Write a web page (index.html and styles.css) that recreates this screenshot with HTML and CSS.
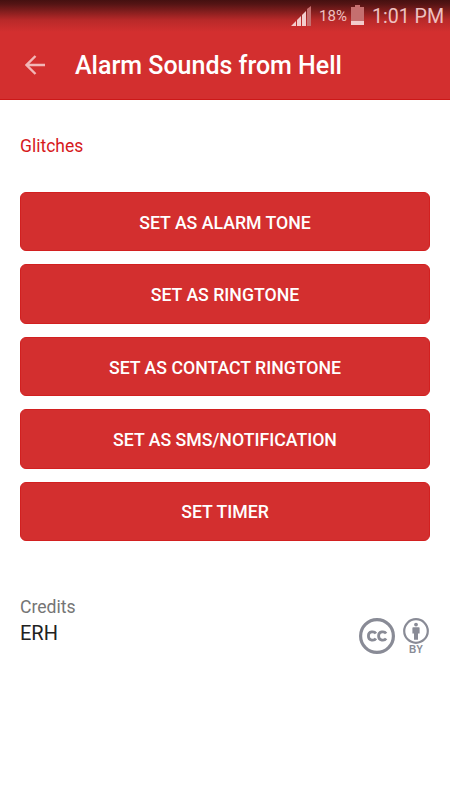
FILE: index.html
```html
<!DOCTYPE html>
<html lang="en">

<head>
    <meta charset="UTF-8">
    <meta name="viewport" content="width=device-width, initial-scale=1.0">
    <title>Alarm Sounds from Hell</title>
    <link rel="stylesheet" href="styles.css">
</head>

<body>

    <header class="header">
        <!-- Status bar -->
        <div class="status-bar">
            <svg class="signal" width="21" height="21" viewBox="0 0 21 21">
                <path d="M0 20L5 15V20zM6 14L10 10V20H6zM11 9L15 5V20H11z" />
                <path class="dim" d="M16 3L20 0V20H16z" />
            </svg>
            <span class="percent">18%</span>
            <svg class="battery" width="13" height="20" viewBox="0 0 13 20">
                <path class="dim" d="M4 0H9V2H13V17H0V2H4z" />
                <path d="M0 16H13V20H0z" />
            </svg>
            <span class="time">1:01 PM</span>
        </div>

        <div class="toolbar">
            <svg class="back" width="20" height="20" viewBox="0 0 20 20">
                <path d="M20 10H1.5M10.5 1L1.5 10L10.5 19" />
            </svg>
            <h1>Alarm Sounds from Hell</h1>
        </div>
    </header>

    <main class="container">
        <h2>Glitches</h2>

        <div class="buttons">
            <button>SET AS ALARM TONE</button>
            <button>SET AS RINGTONE</button>
            <button>SET AS CONTACT RINGTONE</button>
            <button>SET AS SMS/NOTIFICATION</button>
            <button>SET TIMER</button>
        </div>

        <div class="credits">
            <div class="author">
                <p class="label">Credits</p>
                <p class="name">ERH</p>
            </div>

            <!-- Creative commons badges -->
            <svg class="license" width="71" height="38" viewBox="0 0 71 38">
                <circle class="ring" cx="18" cy="18" r="16.4" stroke-width="3.2" />
                <path class="letter" d="M16.9 15.5C15.4 13.1 9.4 12.9 9.4 18S15.4 22.9 16.9 20.5M27.1 15.5C25.6 13.1 19.6 12.9 19.6 18S25.6 22.9 27.1 20.5" />
                <circle class="ring" cx="57" cy="13" r="11.8" stroke-width="2.2" />
                <circle cx="57" cy="6.6" r="1.9" />
                <path d="M54.2 9.2H59.8Q60.6 9.2 60.6 10V15.5H59V21.8H55V15.5H53.4V10Q53.4 9.2 54.2 9.2z" />
                <text x="57" y="35.4" text-anchor="middle">BY</text>
            </svg>
        </div>
    </main>

</body>

</html>
```

FILE: styles.css
```css
* {
    box-sizing: border-box;
}

body {
    font-family: Roboto, sans-serif;
    background-color: #fff;
    margin: 0;
    padding: 0;
}

h1,
h2,
p {
    margin: 0;
}

.header {
    height: 100px;
    background: linear-gradient(#451010 0, #541414 4px, #b82929 20px, #d32f2f 32px);
    border-bottom: 1px solid #cc1818;
}

/* Status bar */
.status-bar {
    display: flex;
    justify-content: flex-end;
    height: 32px;
    padding-right: 6px;
    color: #eec0c0;
}

.status-bar svg {
    fill: #f2cccc;
}

.status-bar .dim {
    fill: #c56f6f;
}

.signal {
    margin: 6px 7px 0 0;
}

.percent {
    font-size: 15px;
    line-height: 33px;
    margin-right: 4px;
}

.battery {
    margin: 5px 8px 0 0;
}

.time {
    font-size: 19.6px;
    line-height: 33px;
}

/* Title bar */
.toolbar {
    display: flex;
    align-items: center;
    height: 67px;
    padding-left: 25px;
}

.back {
    fill: none;
    stroke: #f2b6b6;
    stroke-width: 2.4;
    margin-top: -1px;
}

.toolbar h1 {
    color: #fff;
    font-size: 25px;
    font-weight: 500;
    margin-left: 30px;
}

.container {
    padding: 34px 20px 0;
}

.container h2 {
    color: #d6191c;
    font-size: 17.5px;
    font-weight: 400;
    line-height: 24px;
}

/* Action buttons */
.buttons {
    display: grid;
    gap: 12.8px;
    margin-top: 33.7px;
}

.buttons button {
    height: 59.7px;
    padding: 2px 0 0;
    border: 1px solid #d22020;
    border-radius: 6px;
    background-color: #d32f2f;
    color: #fff;
    font-family: Roboto, sans-serif;
    font-size: 17.7px;
    font-weight: 500;
}

/* Credits */
.credits {
    display: flex;
    justify-content: space-between;
    margin-top: 54px;
}

.label {
    color: #757575;
    font-size: 17.6px;
    line-height: 24px;
}

.name {
    color: #212121;
    font-size: 20px;
    line-height: 28px;
}

.license {
    margin-top: 22.7px;
    fill: #898b96;
}

.license .ring {
    fill: none;
    stroke: #898b96;
}

.license .letter {
    fill: none;
    stroke: #898b96;
    stroke-width: 2.8;
}

.license text {
    font-family: "Liberation Sans", Arial, sans-serif;
    font-size: 10px;
    font-weight: 700;
}
```
